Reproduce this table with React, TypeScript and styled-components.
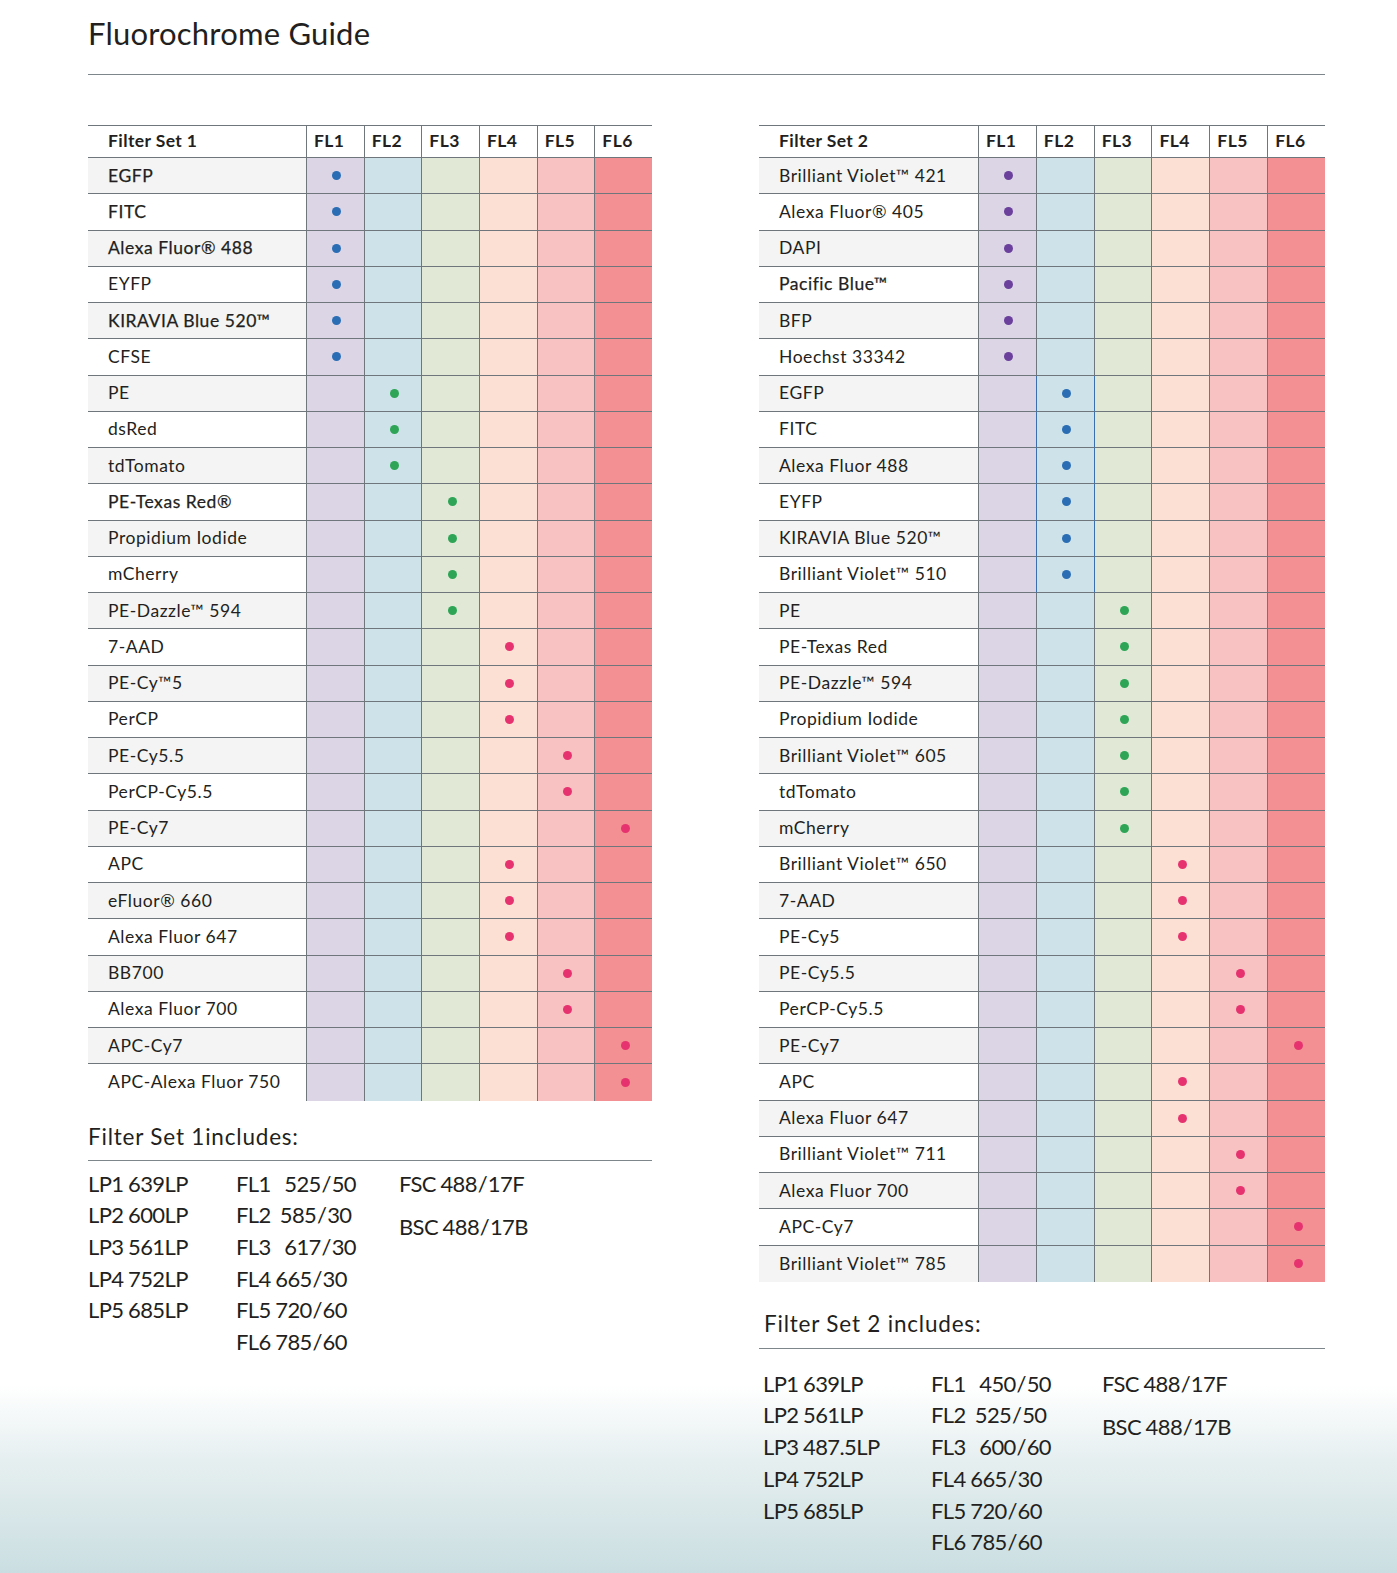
import React from 'react';
import styled, { createGlobalStyle } from 'styled-components';

const Global = createGlobalStyle`
  html, body { margin: 0; padding: 0; background: #fff; }
  body { font-family: Lato, "Open Sans", sans-serif; color: #231f20; }
`;

const COLORS = ['#dbd5e6', '#cde3e9', '#e1e9d6', '#fbe0d3', '#f8c1c2', '#f39093'];
const LINE = '#6f777c';

type Dot = 'blue' | 'green' | 'pink' | 'purple';
const DOT: Record<Dot, string> = {
  blue: '#2b6db4',
  green: '#2ea556',
  pink: '#e6336f',
  purple: '#6b3f9c',
};

type Row = { name: string; fl: number; bold?: boolean; hl?: boolean };

const set1: Row[] = [
  { name: 'EGFP', fl: 1, bold: true },
  { name: 'FITC', fl: 1, bold: true },
  { name: 'Alexa Fluor® 488', fl: 1, bold: true },
  { name: 'EYFP', fl: 1 },
  { name: 'KIRAVIA Blue 520™', fl: 1, bold: true },
  { name: 'CFSE', fl: 1 },
  { name: 'PE', fl: 2 },
  { name: 'dsRed', fl: 2 },
  { name: 'tdTomato', fl: 2 },
  { name: 'PE-Texas Red®', fl: 3, bold: true },
  { name: 'Propidium Iodide', fl: 3 },
  { name: 'mCherry', fl: 3 },
  { name: 'PE-Dazzle™ 594', fl: 3 },
  { name: '7-AAD', fl: 4 },
  { name: 'PE-Cy™5', fl: 4 },
  { name: 'PerCP', fl: 4 },
  { name: 'PE-Cy5.5', fl: 5 },
  { name: 'PerCP-Cy5.5', fl: 5 },
  { name: 'PE-Cy7', fl: 6 },
  { name: 'APC', fl: 4 },
  { name: 'eFluor® 660', fl: 4 },
  { name: 'Alexa Fluor 647', fl: 4 },
  { name: 'BB700', fl: 5 },
  { name: 'Alexa Fluor 700', fl: 5 },
  { name: 'APC-Cy7', fl: 6 },
  { name: 'APC-Alexa Fluor 750', fl: 6 },
];

const set2: Row[] = [
  { name: 'Brilliant Violet™ 421', fl: 1 },
  { name: 'Alexa Fluor® 405', fl: 1 },
  { name: 'DAPI', fl: 1 },
  { name: 'Pacific Blue™', fl: 1, bold: true },
  { name: 'BFP', fl: 1 },
  { name: 'Hoechst 33342', fl: 1 },
  { name: 'EGFP', fl: 2, hl: true },
  { name: 'FITC', fl: 2, hl: true },
  { name: 'Alexa Fluor 488', fl: 2, hl: true },
  { name: 'EYFP', fl: 2, hl: true },
  { name: 'KIRAVIA Blue 520™', fl: 2, hl: true },
  { name: 'Brilliant Violet™ 510', fl: 2, hl: true },
  { name: 'PE', fl: 3 },
  { name: 'PE-Texas Red', fl: 3 },
  { name: 'PE-Dazzle™ 594', fl: 3 },
  { name: 'Propidium Iodide', fl: 3 },
  { name: 'Brilliant Violet™ 605', fl: 3 },
  { name: 'tdTomato', fl: 3 },
  { name: 'mCherry', fl: 3 },
  { name: 'Brilliant Violet™ 650', fl: 4 },
  { name: '7-AAD', fl: 4 },
  { name: 'PE-Cy5', fl: 4 },
  { name: 'PE-Cy5.5', fl: 5 },
  { name: 'PerCP-Cy5.5', fl: 5 },
  { name: 'PE-Cy7', fl: 6 },
  { name: 'APC', fl: 4 },
  { name: 'Alexa Fluor 647', fl: 4 },
  { name: 'Brilliant Violet™ 711', fl: 5 },
  { name: 'Alexa Fluor 700', fl: 5 },
  { name: 'APC-Cy7', fl: 6 },
  { name: 'Brilliant Violet™ 785', fl: 6 },
];

const dotFor1 = (fl: number): Dot => (fl === 1 ? 'blue' : fl <= 3 ? 'green' : 'pink');
const dotFor2 = (fl: number): Dot => (fl === 1 ? 'purple' : fl === 2 ? 'blue' : fl === 3 ? 'green' : 'pink');

const Page = styled.div`
  width: 1397px;
  height: 1573px;
  overflow: hidden;
  box-sizing: border-box;
  padding: 0 0 0 88px;
  background: linear-gradient(
    to bottom,
    #ffffff 0px,
    #ffffff 1385px,
    #e6eff0 1460px,
    #cadee1 1573px
  );
`;

const Title = styled.h1`
  margin: 0;
  height: 74px;
  box-sizing: border-box;
  padding-top: 14px;
  font-family: Lato, sans-serif;
  font-weight: 400;
  font-size: 31px;
  line-height: 38px;
  color: #231f20;
  letter-spacing: 0.2px;
`;

const Rule = styled.div`
  width: 1237px;
  height: 1px;
  background: #7c868b;
`;

const Columns = styled.div`
  display: flex;
  gap: 107px;
  margin-top: 50px;
  align-items: flex-start;
`;

const Column = styled.div<{ $w: number }>`
  width: ${(p) => p.$w}px;
  display: flex;
  flex-direction: column;
`;

const Table = styled.div<{ $name: number }>`
  display: grid;
  grid-template-columns: ${(p) => p.$name}px repeat(6, 1fr);
  grid-auto-rows: 36.25px;
  grid-template-rows: 32px;
  border-top: 1px solid ${LINE};
  font-family: Lato, "Open Sans", sans-serif;
`;

const HeadCell = styled.div<{ $first?: boolean }>`
  box-sizing: border-box;
  display: flex;
  align-items: center;
  padding-left: ${(p) => (p.$first ? '20px' : '7px')};
  padding-bottom: 2px;
  font-weight: 700;
  font-size: 17.5px;
  letter-spacing: 0.4px;
  color: #231f20;
  border-bottom: 1px solid ${LINE};
  border-left: ${(p) => (p.$first ? 'none' : `1px solid ${LINE}`)};
  background: #fff;
`;

const NameCell = styled.div<{ $odd: boolean; $last: boolean; $bold?: boolean }>`
  box-sizing: border-box;
  display: flex;
  align-items: center;
  padding-left: 20px;
  padding-bottom: 1px;
  font-size: 17.5px;
  letter-spacing: 0.55px;
  font-weight: 400;
  -webkit-text-stroke: ${(p) => (p.$bold ? '0.25px #231f20' : '0')};
  color: #231f20;
  white-space: nowrap;
  background: ${(p) => (p.$odd ? '#f4f4f4' : '#ffffff')};
  border-bottom: ${(p) => (p.$last ? 'none' : `1px solid ${LINE}`)};
`;

const ColorCell = styled.div<{ $col: number; $last: boolean; $hl?: boolean }>`
  box-sizing: border-box;
  display: flex;
  align-items: center;
  justify-content: center;
  padding-left: 3px;
  background: ${(p) => COLORS[p.$col]};
  border-left: 1px solid ${(p) => (p.$hl ? '#3b70b0' : LINE)};
  border-right: ${(p) => (p.$hl ? '1px solid #3b70b0' : 'none')};
  margin-right: ${(p) => (p.$hl ? '-1px' : '0')};
  border-bottom: ${(p) => (p.$last ? 'none' : `1px solid ${LINE}`)};
  position: relative;
  z-index: ${(p) => (p.$hl ? 1 : 0)};
`;

const Marker = styled.span<{ $c: Dot }>`
  width: 9px;
  height: 9px;
  border-radius: 50%;
  background: ${(p) => DOT[p.$c]};
`;

const IncTitle = styled.div<{ $top: number; $bottom: number; $indent: number }>`
  margin-top: ${(p) => p.$top}px;
  padding: 0 0 ${(p) => p.$bottom}px ${(p) => p.$indent}px;
  font-family: Lato, sans-serif;
  font-size: 22.5px;
  line-height: 26px;
  letter-spacing: 0.8px;
  color: #231f20;
  border-bottom: 1px solid #7c868b;
`;

const Specs = styled.div<{ $top: number; $indent: number; $c1: number; $c2: number }>`
  display: grid;
  grid-template-columns: ${(p) => p.$c1}px ${(p) => p.$c2}px auto;
  margin-top: ${(p) => p.$top}px;
  padding-left: ${(p) => p.$indent}px;
  font-family: Lato, sans-serif;
  font-size: 22px;
  color: #231f20;
`;

const SpecList = styled.div<{ $gap?: number }>`
  display: flex;
  flex-direction: column;
  gap: ${(p) => p.$gap ?? 0}px;
`;

const Spec = styled.div`
  line-height: 31.7px;
  white-space: pre;
  letter-spacing: -0.6px;
  word-spacing: -0.5px;
`;

function FilterTable({ title, rows, dot, name }: { title: string; rows: Row[]; dot: (fl: number) => Dot; name: number }) {
  return (
    <Table $name={name}>
      <HeadCell $first>{title}</HeadCell>
      {[1, 2, 3, 4, 5, 6].map((i) => (
        <HeadCell key={i}>FL{i}</HeadCell>
      ))}
      {rows.map((r, idx) => {
        const last = idx === rows.length - 1;
        return (
          <React.Fragment key={r.name + idx}>
            <NameCell $odd={idx % 2 === 0} $last={last} $bold={r.bold}>
              {r.name}
            </NameCell>
            {[1, 2, 3, 4, 5, 6].map((c) => (
              <ColorCell key={c} $col={c - 1} $last={last} $hl={r.hl && c === 2}>
                {r.fl === c && <Marker $c={dot(c)} />}
              </ColorCell>
            ))}
          </React.Fragment>
        );
      })}
    </Table>
  );
}

const S = '\u200A/\u200A';

export default function App() {
  return (
    <>
      <Global />
      <Page>
        <Title>Fluorochrome Guide</Title>
        <Rule />
        <Columns>
          <Column $w={564}>
            <FilterTable title="Filter Set 1" rows={set1} dot={dotFor1} name={218} />
            <IncTitle $top={23} $bottom={10} $indent={0}>
              Filter Set 1includes:
            </IncTitle>
            <Specs $top={7} $indent={0} $c1={148} $c2={163}>
              <SpecList>
                <Spec>LP1 639LP</Spec>
                <Spec>LP2 600LP</Spec>
                <Spec>LP3 561LP</Spec>
                <Spec>LP4 752LP</Spec>
                <Spec>LP5 685LP</Spec>
              </SpecList>
              <SpecList>
                <Spec>{`FL1   525${S}50`}</Spec>
                <Spec>{`FL2  585${S}30`}</Spec>
                <Spec>{`FL3   617${S}30`}</Spec>
                <Spec>{`FL4 665${S}30`}</Spec>
                <Spec>{`FL5 720${S}60`}</Spec>
                <Spec>{`FL6 785${S}60`}</Spec>
              </SpecList>
              <SpecList $gap={12}>
                <Spec>{`FSC 488${S}17F`}</Spec>
                <Spec>{`BSC 488${S}17B`}</Spec>
              </SpecList>
            </Specs>
          </Column>
          <Column $w={566}>
            <FilterTable title="Filter Set 2" rows={set2} dot={dotFor2} name={219} />
            <IncTitle $top={29} $bottom={11} $indent={5}>
              Filter Set 2 includes:
            </IncTitle>
            <Specs $top={19} $indent={4} $c1={168} $c2={171}>
              <SpecList>
                <Spec>LP1 639LP</Spec>
                <Spec>LP2 561LP</Spec>
                <Spec>LP3 487.5LP</Spec>
                <Spec>LP4 752LP</Spec>
                <Spec>LP5 685LP</Spec>
              </SpecList>
              <SpecList>
                <Spec>{`FL1   450${S}50`}</Spec>
                <Spec>{`FL2  525${S}50`}</Spec>
                <Spec>{`FL3   600${S}60`}</Spec>
                <Spec>{`FL4 665${S}30`}</Spec>
                <Spec>{`FL5 720${S}60`}</Spec>
                <Spec>{`FL6 785${S}60`}</Spec>
              </SpecList>
              <SpecList $gap={12}>
                <Spec>{`FSC 488${S}17F`}</Spec>
                <Spec>{`BSC 488${S}17B`}</Spec>
              </SpecList>
            </Specs>
          </Column>
        </Columns>
      </Page>
    </>
  );
}
